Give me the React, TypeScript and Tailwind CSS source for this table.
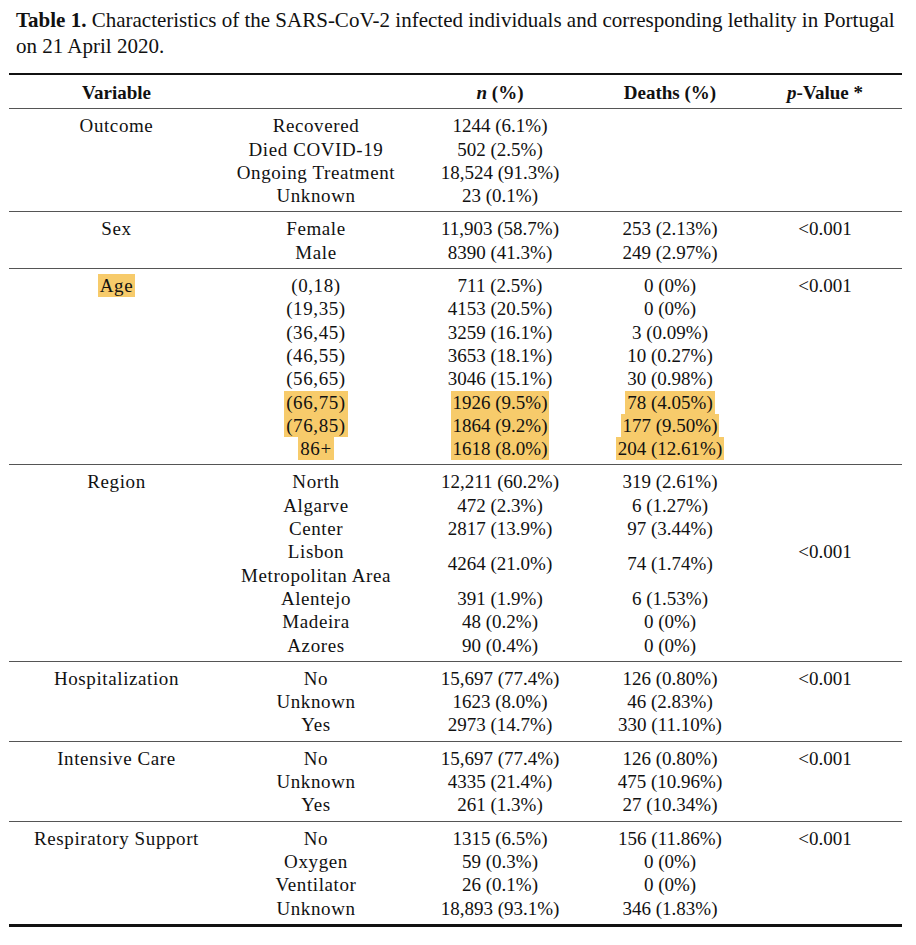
type Row = {
  sub: string[]
  n: string
  d?: string
  p?: string
  hl?: boolean
}

type Group = {
  name: string
  hlName?: boolean
  rows: Row[]
}

const groups: Group[] = [
  {
    name: 'Outcome',
    rows: [
      { sub: ['Recovered'], n: '1244 (6.1%)' },
      { sub: ['Died COVID-19'], n: '502 (2.5%)' },
      { sub: ['Ongoing Treatment'], n: '18,524 (91.3%)' },
      { sub: ['Unknown'], n: '23 (0.1%)' },
    ],
  },
  {
    name: 'Sex',
    rows: [
      { sub: ['Female'], n: '11,903 (58.7%)', d: '253 (2.13%)', p: '<0.001' },
      { sub: ['Male'], n: '8390 (41.3%)', d: '249 (2.97%)' },
    ],
  },
  {
    name: 'Age',
    hlName: true,
    rows: [
      { sub: ['(0,18)'], n: '711 (2.5%)', d: '0 (0%)', p: '<0.001' },
      { sub: ['(19,35)'], n: '4153 (20.5%)', d: '0 (0%)' },
      { sub: ['(36,45)'], n: '3259 (16.1%)', d: '3 (0.09%)' },
      { sub: ['(46,55)'], n: '3653 (18.1%)', d: '10 (0.27%)' },
      { sub: ['(56,65)'], n: '3046 (15.1%)', d: '30 (0.98%)' },
      { sub: ['(66,75)'], n: '1926 (9.5%)', d: '78 (4.05%)', hl: true },
      { sub: ['(76,85)'], n: '1864 (9.2%)', d: '177 (9.50%)', hl: true },
      { sub: ['86+'], n: '1618 (8.0%)', d: '204 (12.61%)', hl: true },
    ],
  },
  {
    name: 'Region',
    rows: [
      { sub: ['North'], n: '12,211 (60.2%)', d: '319 (2.61%)' },
      { sub: ['Algarve'], n: '472 (2.3%)', d: '6 (1.27%)' },
      { sub: ['Center'], n: '2817 (13.9%)', d: '97 (3.44%)' },
      { sub: ['Lisbon', 'Metropolitan Area'], n: '4264 (21.0%)', d: '74 (1.74%)', p: '<0.001' },
      { sub: ['Alentejo'], n: '391 (1.9%)', d: '6 (1.53%)' },
      { sub: ['Madeira'], n: '48 (0.2%)', d: '0 (0%)' },
      { sub: ['Azores'], n: '90 (0.4%)', d: '0 (0%)' },
    ],
  },
  {
    name: 'Hospitalization',
    rows: [
      { sub: ['No'], n: '15,697 (77.4%)', d: '126 (0.80%)', p: '<0.001' },
      { sub: ['Unknown'], n: '1623 (8.0%)', d: '46 (2.83%)' },
      { sub: ['Yes'], n: '2973 (14.7%)', d: '330 (11.10%)' },
    ],
  },
  {
    name: 'Intensive Care',
    rows: [
      { sub: ['No'], n: '15,697 (77.4%)', d: '126 (0.80%)', p: '<0.001' },
      { sub: ['Unknown'], n: '4335 (21.4%)', d: '475 (10.96%)' },
      { sub: ['Yes'], n: '261 (1.3%)', d: '27 (10.34%)' },
    ],
  },
  {
    name: 'Respiratory Support',
    rows: [
      { sub: ['No'], n: '1315 (6.5%)', d: '156 (11.86%)', p: '<0.001' },
      { sub: ['Oxygen'], n: '59 (0.3%)', d: '0 (0%)' },
      { sub: ['Ventilator'], n: '26 (0.1%)', d: '0 (0%)' },
      { sub: ['Unknown'], n: '18,893 (93.1%)', d: '346 (1.83%)' },
    ],
  },
]

const cols = 'grid grid-cols-[215px_184px_184px_156px_154px]'

// inline highlight, kept inside a block so padding doesn't grow the row
function Mark({ on, children }: { on?: boolean; children: React.ReactNode }) {
  return (
    <div>
      {on ? <span className="bg-[#f7cb6b] px-[2px] py-[1px]">{children}</span> : children}
    </div>
  )
}

export default function App() {
  return (
    <div className="w-[916px] h-[945px] bg-white text-[#111] font-['Liberation_Serif',serif] text-[19px]">
      <p className="pl-4 pt-[7px] leading-[26px] text-[21px] whitespace-nowrap">
        <span className="font-bold">Table 1.</span> Characteristics of the SARS-CoV-2 infected individuals and
        corresponding lethality in Portugal
        <br />
        on 21 April 2020.
      </p>

      <div className="ml-[9px] w-[893px] mt-[14px] border-t-2 border-b-[3px] border-[#111]">
        {/* header */}
        <div className={`${cols} pt-[6px] pb-[4px] leading-[23.3px] font-bold border-b border-[#555] text-center`}>
          <div>Variable</div>
          <div></div>
          <div>
            <i>n</i> (%)
          </div>
          <div>Deaths (%)</div>
          <div>
            <i>p</i>-Value *
          </div>
        </div>

        {groups.map((g, gi) => (
          <div
            key={g.name}
            className={`pt-[5px] pb-[4px] ${gi < groups.length - 1 ? 'border-b border-[#555]' : ''}`}
          >
            {g.rows.map((r, ri) => (
              <div key={ri} className={`${cols} leading-[23.3px] text-center`}>
                <div className="tracking-[0.6px]">
                  {ri === 0 ? <Mark on={g.hlName}>{g.name}</Mark> : null}
                </div>
                <div className="tracking-[0.6px]">
                  {r.sub.map((s) => (
                    <Mark key={s} on={r.hl}>
                      {s}
                    </Mark>
                  ))}
                </div>
                <div className="flex flex-col justify-center">
                  <Mark on={r.hl}>{r.n}</Mark>
                </div>
                <div className="flex flex-col justify-center">
                  {r.d ? <Mark on={r.hl}>{r.d}</Mark> : null}
                </div>
                <div>{r.p}</div>
              </div>
            ))}
          </div>
        ))}
      </div>
    </div>
  )
}
